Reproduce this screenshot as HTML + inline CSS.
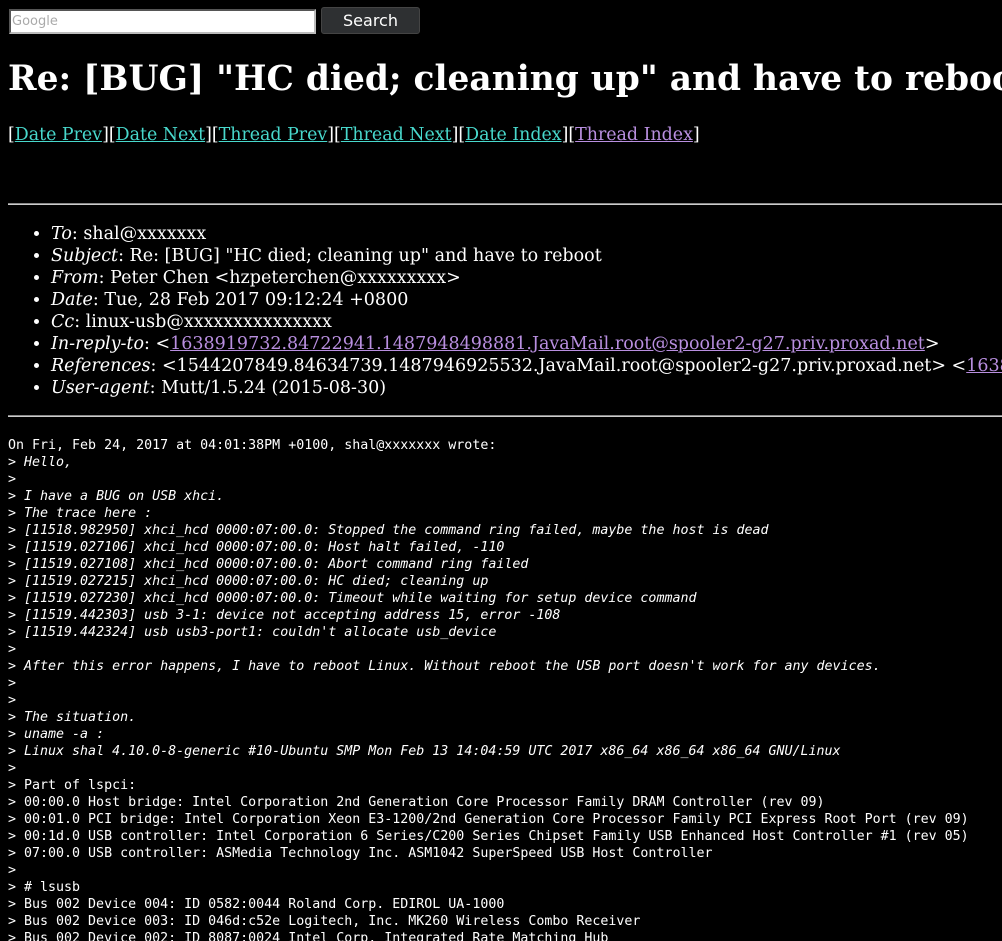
<!DOCTYPE html>
<html><head><meta charset="utf-8"><style>
html,body{margin:0;padding:0;background:#000;color:#fff;overflow:hidden;width:1002px;height:941px}
body{font-family:"DejaVu Serif","Liberation Serif",serif;font-size:17.5px;position:relative;white-space:nowrap}
a{color:#48d8cc}
a.v{color:#b98fe0}
.inp{position:absolute;left:9px;top:9px;width:302px;height:21px;background:#fff;border:2px solid #bbb;border-top-color:#555;border-left-color:#555;font-family:"DejaVu Sans",sans-serif;font-size:13px;color:#aaa;line-height:21px;padding-left:1px;box-sizing:content-box}
.btn{position:absolute;left:321px;top:7px;width:99px;height:27px;background:#2e3032;border:1px solid #444;border-radius:3px;box-sizing:border-box;color:#fff;font-family:"DejaVu Sans",sans-serif;font-size:16px;text-align:center;line-height:26px}
h1{position:absolute;left:8px;top:58px;margin:0;font-size:34.4px;font-weight:bold;line-height:42px}
.nav{position:absolute;left:8px;top:124px;line-height:22px;font-size:17.4px}
hr{position:absolute;left:8px;right:0;margin:0;border:0;border-top:1px solid #888;border-bottom:1px solid #ccc;height:0}
ul{position:absolute;left:0;top:223px;margin:0;padding-left:51px;line-height:22px}
pre{position:absolute;left:8px;top:437px;margin:0;font-family:"DejaVu Sans Mono","Liberation Mono",monospace;font-size:13.3px;line-height:17px}
</style></head><body>
<div class="inp">Google</div>
<div class="btn">Search</div>
<h1>Re: [BUG] "HC died; cleaning up" and have to reboot</h1>
<div class="nav">[<a href="#">Date Prev</a>][<a href="#">Date Next</a>][<a href="#">Thread Prev</a>][<a href="#">Thread Next</a>][<a href="#">Date Index</a>][<a class="v" href="#">Thread Index</a>]</div>
<hr style="top:203px">
<ul>
<li><i>To</i>: shal@xxxxxxx</li>
<li><i>Subject</i>: Re: [BUG] "HC died; cleaning up" and have to reboot</li>
<li><i>From</i>: Peter Chen &lt;hzpeterchen@xxxxxxxxx&gt;</li>
<li><i>Date</i>: Tue, 28 Feb 2017 09:12:24 +0800</li>
<li><i>Cc</i>: linux-usb@xxxxxxxxxxxxxxx</li>
<li><i>In-reply-to</i>: &lt;<a class="v" href="#">1638919732.84722941.1487948498881.JavaMail.root@spooler2-g27.priv.proxad.net</a>&gt;</li>
<li><i>References</i>: &lt;1544207849.84634739.1487946925532.JavaMail.root@spooler2-g27.priv.proxad.net&gt; &lt;<a class="v" href="#">1638919732.84722941.1487948498881.JavaMail.root@spooler2-g27.priv.proxad.net</a>&gt;</li>
<li><i>User-agent</i>: Mutt/1.5.24 (2015-08-30)</li>
</ul>
<hr style="top:415px">
<pre>On Fri, Feb 24, 2017 at 04:01:38PM +0100, shal@xxxxxxx wrote:
&gt; <i>Hello,</i>
&gt; 
&gt; <i>I have a BUG on USB xhci.</i>
&gt; <i>The trace here :</i>
&gt; <i>[11518.982950] xhci_hcd 0000:07:00.0: Stopped the command ring failed, maybe the host is dead</i>
&gt; <i>[11519.027106] xhci_hcd 0000:07:00.0: Host halt failed, -110</i>
&gt; <i>[11519.027108] xhci_hcd 0000:07:00.0: Abort command ring failed</i>
&gt; <i>[11519.027215] xhci_hcd 0000:07:00.0: HC died; cleaning up</i>
&gt; <i>[11519.027230] xhci_hcd 0000:07:00.0: Timeout while waiting for setup device command</i>
&gt; <i>[11519.442303] usb 3-1: device not accepting address 15, error -108</i>
&gt; <i>[11519.442324] usb usb3-port1: couldn't allocate usb_device</i>
&gt; 
&gt; <i>After this error happens, I have to reboot Linux. Without reboot the USB port doesn't work for any devices.</i>
&gt; 
&gt; 
&gt; <i>The situation.</i>
&gt; <i>uname -a :</i>
&gt; <i>Linux shal 4.10.0-8-generic #10-Ubuntu SMP Mon Feb 13 14:04:59 UTC 2017 x86_64 x86_64 x86_64 GNU/Linux</i>
&gt; 
&gt; Part of lspci:
&gt; 00:00.0 Host bridge: Intel Corporation 2nd Generation Core Processor Family DRAM Controller (rev 09)
&gt; 00:01.0 PCI bridge: Intel Corporation Xeon E3-1200/2nd Generation Core Processor Family PCI Express Root Port (rev 09)
&gt; 00:1d.0 USB controller: Intel Corporation 6 Series/C200 Series Chipset Family USB Enhanced Host Controller #1 (rev 05)
&gt; 07:00.0 USB controller: ASMedia Technology Inc. ASM1042 SuperSpeed USB Host Controller
&gt; 
&gt; # lsusb
&gt; Bus 002 Device 004: ID 0582:0044 Roland Corp. EDIROL UA-1000
&gt; Bus 002 Device 003: ID 046d:c52e Logitech, Inc. MK260 Wireless Combo Receiver
&gt; Bus 002 Device 002: ID 8087:0024 Intel Corp. Integrated Rate Matching Hub
</pre>
</body></html>
